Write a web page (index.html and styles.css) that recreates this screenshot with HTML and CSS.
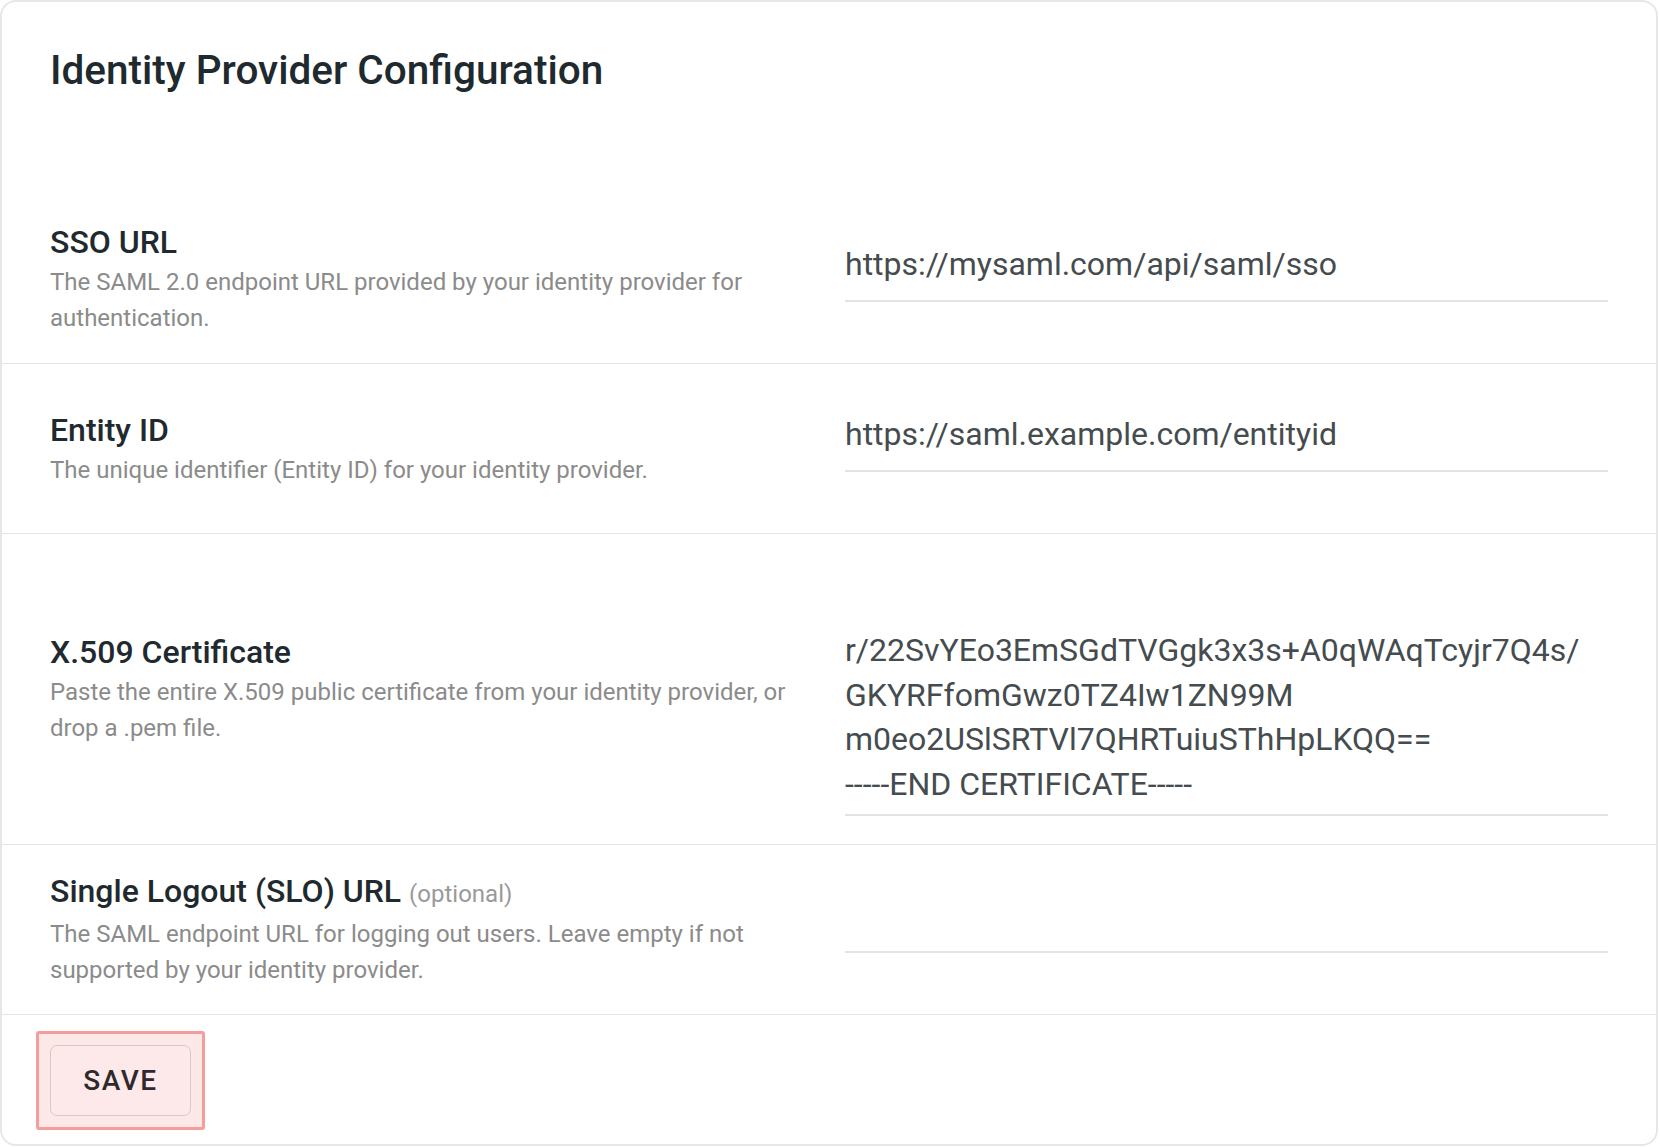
FILE: index.html
```html
<!doctype html>
<html>
<head>
<meta charset="utf-8">
<title>Identity Provider Configuration</title>
<link rel="stylesheet" href="styles.css">
</head>

<body>

<div class="card">
    <div class="card-head">
        <h1>Identity Provider Configuration</h1>
    </div>

    <!-- sso -->
    <div class="row">
        <div class="info">
            <div class="label">SSO URL</div>
            <div class="desc">The SAML 2.0 endpoint URL provided by your identity provider for authentication.</div>
        </div>
        <input class="field" type="text" value="https://mysaml.com/api/saml/sso">
    </div>

    <!-- entity id -->
    <div class="row">
        <div class="info">
            <div class="label">Entity ID</div>
            <div class="desc">The unique identifier (Entity ID) for your identity provider.</div>
        </div>
        <input class="field" type="text" value="https://saml.example.com/entityid">
    </div>

    <!-- certificate -->
    <div class="row">
        <div class="info">
            <div class="label">X.509 Certificate</div>
            <div class="desc">Paste the entire X.509 public certificate from your identity provider, or drop a .pem file.</div>
        </div>
        <textarea class="field field-cert" rows="4">r/22SvYEo3EmSGdTVGgk3x3s+A0qWAqTcyjr7Q4s/
GKYRFfomGwz0TZ4Iw1ZN99M
m0eo2USlSRTVl7QHRTuiuSThHpLKQQ==
-----END CERTIFICATE-----</textarea>
    </div>

    <!-- slo -->
    <div class="row">
        <div class="info">
            <div class="label">Single Logout (SLO) URL <span class="opt">(optional)</span></div>
            <div class="desc">The SAML endpoint URL for logging out users. Leave empty if not supported by your identity provider.</div>
        </div>
        <input class="field" type="text" value="">
    </div>

    <div class="card-foot">
        <span class="save-ring"><button class="btn-save" type="button">SAVE</button></span>
    </div>
</div>

</body>
</html>
```

FILE: styles.css
```css
*{ padding: 0; margin: 0; box-sizing: border-box; }
body{ background: #fff; font-family: Roboto, "Liberation Sans", sans-serif; }

.card { width: 1658px; height: 1146px; border: 2px solid #e7e7e7; border-radius: 16px; background: #fff; overflow: hidden; }

.card-head { padding: 44px 48px 100px; }
.card-head h1 { font-size: 40.5px; line-height: 48px; font-weight: 500; color: #1f2a2f; }

.row { display: grid; grid-template-columns: 1fr 1fr; column-gap: 32px; align-items: center; min-height: 170px; padding: 20px 48px; border-bottom: 1px solid #e4e4e4; }
.row .label { font-size: 32px; line-height: 40px; font-weight: 500; color: #1f2a2f; }
.row .opt { font-size: 24px; font-weight: 400; color: #9a9a9a; }
.row .desc { margin-top: 2px; font-size: 24px; line-height: 36px; color: #8b8b8b; }

.field { display: block; width: 100%; font-family: Roboto, "Liberation Sans", sans-serif; font-size: 32px; color: #454c4f; border: none; border-bottom: 2px solid #e3e3e3; background: transparent; outline: none; }
input.field { height: 56px; line-height: 36px; padding: 0 0 18px; margin-bottom: 10px; }
.field-cert { height: 262px; line-height: 44.5px; padding: 74px 0 8px; margin-bottom: 8px; resize: none; overflow: hidden; white-space: pre; }

.card-foot { padding: 16px 48px; }
.save-ring { display: inline-block; margin-left: -14px; padding: 11px; border: 3px solid #f59d9b; border-radius: 3px; background: #fde8e8; line-height: 0; }
.btn-save { width: 141px; height: 71px; border: 1.5px solid #dcc6c6; border-radius: 7px; background: #fde9e9; font-family: Roboto, "Liberation Sans", sans-serif; font-size: 28px; font-weight: 500; letter-spacing: 1.5px; color: #2e2a2b; cursor: pointer; }
```
